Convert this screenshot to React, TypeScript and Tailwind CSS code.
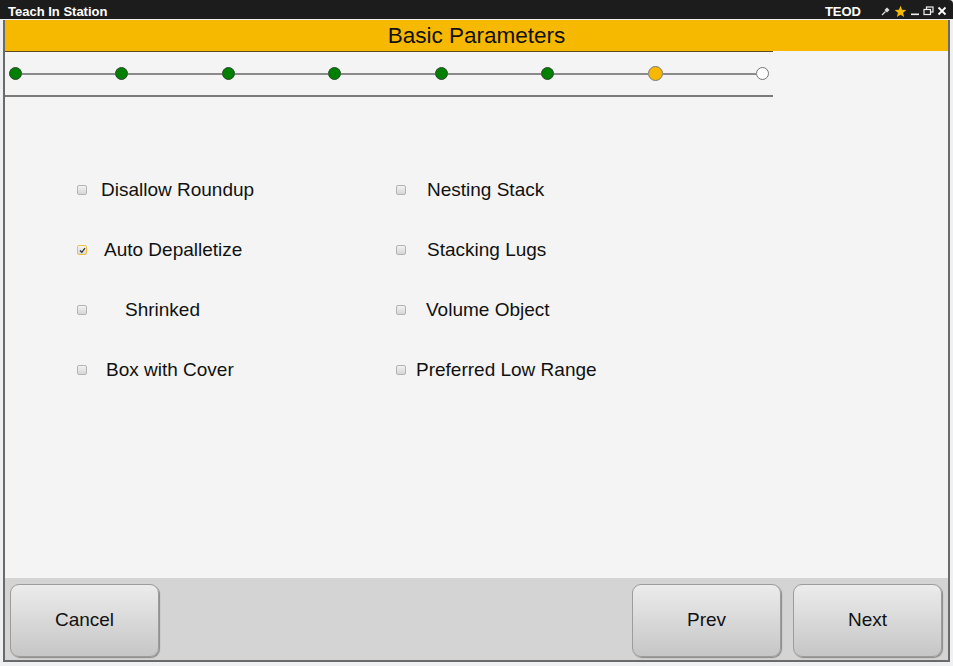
import React from "react";

const font = { fontFamily: '"Liberation Sans", Arial, sans-serif' };

function Check({ checked }: { checked?: boolean }) {
  return (
    <div
      className={
        "w-[10px] h-[10px] rounded-[2px] border flex items-center justify-center shrink-0 " +
        (checked
          ? "border-[#f0c040] bg-gradient-to-b from-[#f4f4f4] to-[#d8d8d8]"
          : "border-[#b4b4b4] bg-gradient-to-b from-[#f2f2f2] to-[#d6d6d6]")
      }
    >
      {checked && (
        <svg width="7" height="7" viewBox="0 0 7 7">
          <path d="M1 3.5 L2.8 5.3 L6 1.2" stroke="#333" strokeWidth="1.3" fill="none" />
        </svg>
      )}
    </div>
  );
}

function Item({ label, checked, pad }: { label: string; checked?: boolean; pad: string }) {
  return (
    <div className="h-[60px] flex items-center">
      <Check checked={checked} />
      <span className={"text-[19px] text-[#111] " + pad}>{label}</span>
    </div>
  );
}

function Dot({ kind }: { kind: "g" | "y" | "w" }) {
  if (kind === "g")
    return <div className="w-[13px] h-[13px] rounded-full bg-[#008000] border border-[#2a4a2a] shrink-0" />;
  if (kind === "y")
    return <div className="w-[15px] h-[15px] rounded-full bg-[#f8b800] border border-[#7a7a7a] shrink-0" />;
  return <div className="w-[13px] h-[13px] rounded-full bg-white border border-[#777] shrink-0" />;
}

function Btn({ label, w }: { label: string; w: string }) {
  return (
    <button
      className={
        "h-[73px] rounded-[9px] border border-[#9c9c9c] bg-gradient-to-b from-[#ececec] to-[#c6c6c6] shadow-[1px_1px_1px_rgba(0,0,0,0.35)] text-[19px] text-[#111] flex items-center justify-center " +
        w
      }
      style={font}
    >
      {label}
    </button>
  );
}

export default function App() {
  const dots: ("g" | "y" | "w")[] = ["g", "g", "g", "g", "g", "g", "y", "w"];
  return (
    <div className="w-[953px] h-[666px] bg-[#eef0f2] flex flex-col overflow-hidden" style={font}>
      {/* title bar */}
      <div className="h-[19px] bg-[#1c1c1c] flex items-center pt-[3px] pl-[8px] pr-[6px] rounded-tr-[4px]">
        <span className="text-white font-bold text-[13px] leading-none">Teach In Station</span>
        <div className="flex-1" />
        <span className="text-white font-bold text-[13px] leading-none mr-[20px]">TEOD</span>
        <div className="flex items-center gap-[3px]">
          <svg width="10" height="10" viewBox="0 0 10 10">
            <path d="M1 9 L4.5 5.5" stroke="#ddd" strokeWidth="1.2" />
            <path d="M3.5 4 L6 1.5 L8.5 4 L6 6.5 Z" fill="#ddd" />
          </svg>
          <svg width="13" height="13" viewBox="0 0 24 24">
            <path
              d="M12 1.5 L15 8.8 L22.8 9.4 L16.8 14.5 L18.7 22.2 L12 18 L5.3 22.2 L7.2 14.5 L1.2 9.4 L9 8.8 Z"
              fill="#f5b800"
            />
          </svg>
          <svg width="10" height="10" viewBox="0 0 10 10">
            <rect x="1" y="7.5" width="8" height="1.6" fill="#eee" />
          </svg>
          <svg width="11" height="10" viewBox="0 0 11 10">
            <rect x="3.5" y="1" width="6.5" height="5" fill="none" stroke="#eee" strokeWidth="1.2" />
            <rect x="1" y="3.5" width="6.5" height="5" fill="#1c1c1c" stroke="#eee" strokeWidth="1.2" />
          </svg>
          <svg width="10" height="10" viewBox="0 0 10 10">
            <path d="M1.5 1.5 L8.5 8.5 M8.5 1.5 L1.5 8.5" stroke="#fff" strokeWidth="1.8" />
          </svg>
        </div>
      </div>

      {/* window body */}
      <div className="px-[3px] pt-[1px]">
        <div className="h-[642px] border-x-2 border-b-2 border-[#6a6a6a] bg-[#f4f4f4] flex flex-col">
          {/* header */}
          <div className="h-[31px] bg-[#f7b900] flex items-center justify-center pt-[2px] shrink-0">
            <span className="text-[22.5px] text-[#111] leading-none">Basic Parameters</span>
          </div>
          {/* stepper */}
          <div className="w-[768px] h-[46px] border-t border-[#5c4d1a] border-b-2 border-b-[#7a7a7a] flex items-center pl-[4px] pr-[4px] shrink-0">
            {dots.map((d, i) => (
              <React.Fragment key={i}>
                {i > 0 && <div className="flex-1 h-[2px] bg-[#8a8a8a]" />}
                <Dot kind={d} />
              </React.Fragment>
            ))}
          </div>
          {/* options */}
          <div className="flex-1 flex pt-[63px]">
            <div className="ml-[72px] w-[319px] flex flex-col">
              <Item label="Disallow Roundup" pad="ml-[14px]" />
              <Item label="Auto Depalletize" checked pad="ml-[17px]" />
              <Item label="Shrinked" pad="ml-[38px]" />
              <Item label="Box with Cover" pad="ml-[19px]" />
            </div>
            <div className="flex flex-col">
              <Item label="Nesting Stack" pad="ml-[21px]" />
              <Item label="Stacking Lugs" pad="ml-[21px]" />
              <Item label="Volume Object" pad="ml-[20px]" />
              <Item label="Preferred Low Range" pad="ml-[10px]" />
            </div>
          </div>
          {/* bottom bar */}
          <div className="h-[82px] bg-[#d4d4d4] flex items-start pt-[6px] pl-[5px] pr-[6px] shrink-0">
            <Btn label="Cancel" w="w-[149px]" />
            <div className="flex-1" />
            <Btn label="Prev" w="w-[149px]" />
            <div className="w-[12px]" />
            <Btn label="Next" w="w-[149px]" />
          </div>
        </div>
      </div>
    </div>
  );
}
